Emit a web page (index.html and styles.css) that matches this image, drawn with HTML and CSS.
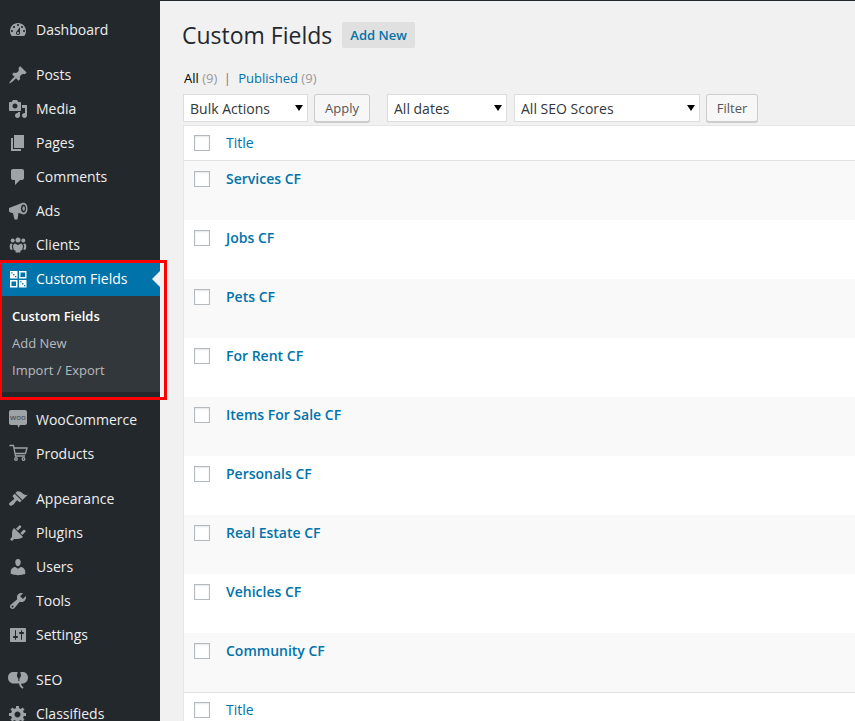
FILE: index.html
```html
<!DOCTYPE html>
<html lang="en">
<head>
  <meta charset="UTF-8" />
  <title>Custom Fields</title>
  <link rel="stylesheet" href="styles.css">
</head>
<body>
  <div class="topbar"></div>
  <div class="wrap">

    <!-- Admin menu -->
    <nav class="sidebar">
      <a class="menu-item"><svg class="icon" viewBox="0 0 20 20"><path d="M3.76 16h12.48c1.1-1.37 1.76-3.11 1.76-5 0-4.42-3.58-8-8-8s-8 3.58-8 8c0 1.89.66 3.63 1.76 5zM10 4c.55 0 1 .45 1 1s-.45 1-1 1-1-.45-1-1 .45-1 1-1zM6 6c.55 0 1 .45 1 1s-.45 1-1 1-1-.45-1-1 .45-1 1-1zm8 0c.55 0 1 .45 1 1s-.45 1-1 1-1-.45-1-1 .45-1 1-1zm-5.37 5.55L12 7v6c0 1.1-.9 2-2 2s-2-.9-2-2c0-.57.24-1.08.63-1.45zM4 10c.55 0 1 .45 1 1s-.45 1-1 1-1-.45-1-1 .45-1 1-1zm12 0c.55 0 1 .45 1 1s-.45 1-1 1-1-.45-1-1 .45-1 1-1zm-5 3c0-.55-.45-1-1-1s-1 .45-1 1 .45 1 1 1 1-.45 1-1z"/></svg>Dashboard</a>
      <div class="menu-sep"></div>
      <a class="menu-item"><svg class="icon" viewBox="0 0 20 20"><path d="M10.44 3.02l1.82-1.82 6.36 6.35-1.83 1.82c-1.05-.68-2.48-.57-3.41.36l-.75.75c-.92.93-1.04 2.35-.35 3.41l-1.83 1.82-2.41-2.41-2.8 2.79c-.42.42-3.38 2.71-3.8 2.29s1.86-3.39 2.28-3.81l2.79-2.79L4.1 9.36l1.83-1.82c1.05.69 2.48.57 3.4-.36l.75-.75c.93-.92 1.05-2.35.36-3.41z"/></svg>Posts</a>
      <a class="menu-item"><svg class="icon" viewBox="0 0 20 20"><path d="M13 11V4c0-.55-.45-1-1-1h-1.67L9 1H5L3.67 3H2c-.55 0-1 .45-1 1v7c0 .55.45 1 1 1h10c.55 0 1-.45 1-1zM7 4.5c1.38 0 2.5 1.12 2.5 2.5S8.38 9.5 7 9.5 4.5 8.38 4.5 7 5.62 4.5 7 4.5zM14 6h5v10.5c0 1.38-1.12 2.5-2.5 2.5S14 17.88 14 16.5s1.12-2.5 2.5-2.5c.17 0 .34.02.5.05V9h-3V6zm-4 8.05V13h2v3.5c0 1.38-1.12 2.5-2.5 2.5S7 17.88 7 16.5 8.12 14 9.5 14c.17 0 .34.02.5.05z"/></svg>Media</a>
      <a class="menu-item"><svg class="icon" viewBox="0 0 20 20"><path d="M6 15V2h10v13H6zm-1 1h8v2H3V5h2v11z"/></svg>Pages</a>
      <a class="menu-item"><svg class="icon" viewBox="0 0 20 20"><path d="M5 2h9c1.1 0 2 .9 2 2v7c0 1.1-.9 2-2 2h-2l-5 5v-5H5c-1.1 0-2-.9-2-2V4c0-1.1.9-2 2-2z"/></svg>Comments</a>
      <a class="menu-item"><svg class="icon" viewBox="0 0 20 20"><path fill-rule="evenodd" d="M1 7L14 2C17 .7 19.500 3 19.500 7.500S17 14.500 14 13l-3.500-1.200L9.500 18.500H6.500L5 12.300 2.500 11.500C1.500 11.200 1 10.500 1 10zM15.500 3.500c-1.500 0-2.600 1.800-2.600 4s1.100 4 2.600 4 2.600-1.800 2.600-4-1.100-4-2.600-4z"/><ellipse cx="15.700" cy="7.500" rx="1.200" ry="2.200"/></svg>Ads</a>
      <a class="menu-item"><svg class="icon" viewBox="0 0 20 20"><circle cx="10" cy="5" r="2.500"/><circle cx="4.700" cy="5.500" r="2"/><circle cx="15.300" cy="5.500" r="2"/><path d="M7 8.500l3 1.500 3-1.500c1.300.5 2 1.700 2 3.200l-.8 3.300-1.600.4-.3 2.100H7.700l-.3-2.100-1.600-.4L5 11.700c0-1.500.7-2.700 2-3.200z"/><path d="M3 8.500c.5.300 1 .4 1.700.4-.5.700-.8 1.700-.8 2.800l.7 2.900-1.300.3L2 14 1.700 11c0-1.100.4-2 1.300-2.500zM17 8.500c-.5.300-1 .4-1.700.4.500.7.800 1.700.8 2.800l-.7 2.900 1.300.3L18 14l.3-3c0-1.100-.4-2-1.300-2.500z"/></svg>Clients</a>

      <a class="menu-item is-current"><svg class="icon" viewBox="0 0 20 20"><path fill-rule="evenodd" d="M2 2h7.500v7.500H2zM3.200 3.200v1.300h1.300V3.200zM5.100 5.100v1.300h1.300V5.100zM7 7v1.300h1.300V7zM11 2h7.500v7.500H11zM12.500 3.500V8H17V3.500zM2 11h7.500v7.500H2zM3.500 12.500V17H8v-4.500zM11 11h7.500v7.500H11zM12.200 12.200v1.300h1.300v-1.300zM14.100 14.100v1.300h1.300v-1.300zM16 16v1.300h1.300V16z"/></svg>Custom Fields</a>
      <ul class="submenu">
        <li class="is-current">Custom Fields</li>
        <li>Add New</li>
        <li>Import / Export</li>
      </ul>
      <div class="menu-sep"></div>

      <a class="menu-item"><svg class="icon" viewBox="0 0 20 20"><path d="M3 0h14c1.100 0 2 .9 2 2v11c0 1.100-.9 2-2 2h-5l-1.500 3-1-3H3c-1.100 0-2-.9-2-2V2c0-1.100.9-2 2-2z"/><text x="10" y="10" class="woo-mark" text-anchor="middle">woo</text></svg>WooCommerce</a>
      <a class="menu-item"><svg class="icon icon-line" viewBox="0 0 20 20"><path d="M1.500 1.500H5.500l2 10.500h9.500M6 4H19l-1.500 5.500H7"/><circle cx="8" cy="15" r="1.300"/><circle cx="15.500" cy="15" r="1.300"/></svg>Products</a>
      <div class="menu-sep"></div>

      <a class="menu-item"><svg class="icon" viewBox="0 0 20 20"><path d="M14.48 11.06L7.41 3.99l1.5-1.5c.5-.56 2.3-.47 3.51.32 1.21.8 1.43 1.28 2.91 2.1 1.18.64 2.45 1.26 4.45.85zm-.71.71L6.7 4.7 4.93 6.47c-.39.39-.39 1.02 0 1.41l1.06 1.06c.39.39.39 1.03 0 1.42-.6.6-1.43 1.11-2.21 1.69-.35.26-.7.53-1.01.84C1.43 13.23.4 14.89 1.65 16.14c1.25 1.25 2.91.22 4.25-1.12.31-.31.58-.66.85-1.01.58-.78 1.09-1.61 1.69-2.21.39-.39 1.02-.39 1.41 0l1.06 1.06c.39.39 1.02.39 1.41 0z"/></svg>Appearance</a>
      <a class="menu-item"><svg class="icon" viewBox="0 0 20 20"><path d="M13.11 4.36L9.87 7.6 8 5.73l3.24-3.24c.35-.34 1.05-.2 1.56.32.52.51.66 1.21.31 1.55zm-8 1.77l.91-1.12 9.01 9.01-1.19.84c-.71.71-2.63 1.16-3.82 1.16H6.14L4.9 17.26c-.59.59-1.54.59-2.12 0-.59-.58-.59-1.53 0-2.12l1.24-1.24v-3.88c0-1.13.4-3.19 1.09-3.89zm7.26 3.97l3.24-3.24c.34-.35 1.04-.21 1.55.31.52.51.66 1.21.31 1.55l-3.24 3.25z"/></svg>Plugins</a>
      <a class="menu-item"><svg class="icon" viewBox="0 0 20 20"><path d="M10 9.25c-2.27 0-2.73-3.44-2.73-3.44C7 4.02 7.82 2 9.97 2c2.16 0 2.98 2.02 2.71 3.81 0 0-.41 3.44-2.68 3.44zm0 2.57L12.72 10c2.39 0 4.52 2.33 4.52 4.53v2.49s-3.65 1.13-7.24 1.13c-3.65 0-7.24-1.13-7.24-1.13v-2.49c0-2.25 1.94-4.48 4.47-4.48z"/></svg>Users</a>
      <a class="menu-item"><svg class="icon" viewBox="0 0 20 20"><path d="M16.68 9.77c-1.34 1.34-3.3 1.67-4.95.99l-5.41 6.52c-.99.99-2.59.99-3.58 0s-.99-2.59 0-3.57l6.52-5.42c-.68-1.65-.35-3.61.99-4.95 1.28-1.28 3.12-1.62 4.72-1.06l-2.89 2.89 2.82 2.82 2.86-2.87c.53 1.58.18 3.39-1.08 4.65zM3.81 16.21c.4.39 1.04.39 1.43 0 .4-.4.4-1.04 0-1.43-.39-.4-1.03-.4-1.43 0-.39.39-.39 1.03 0 1.43z"/></svg>Tools</a>
      <a class="menu-item"><svg class="icon" viewBox="0 0 20 20"><path d="M18 16V4c0-.55-.45-1-1-1H3c-.55 0-1 .45-1 1v12c0 .55.45 1 1 1h14c.55 0 1-.45 1-1zM8 11h1c.55 0 1 .45 1 1s-.45 1-1 1H8v1.5c0 .28-.22.5-.5.5s-.5-.22-.5-.5V13H6c-.55 0-1-.45-1-1s.45-1 1-1h1V5.5c0-.28.22-.5.5-.5s.5.22.5.5V11zm5-2h-1c-.55 0-1-.45-1-1s.45-1 1-1h1V5.5c0-.28.22-.5.5-.5s.5.22.5.5V7h1c.55 0 1 .45 1 1s-.45 1-1 1h-1v5.5c0 .28-.22.5-.5.5s-.5-.22-.5-.5V9z"/></svg>Settings</a>
      <div class="menu-sep"></div>

      <a class="menu-item"><svg class="icon" viewBox="0 0 20 20"><path d="M5.500 2H9c.6 0 .8.6.5 1.200-.8 1.800-.8 3.300.5 4.800.4.500.5 1.500.3 3h1.200c-.2-1.500-.1-2.500.3-3 1.300-1.500 1.500-3 .7-4.800C12.200 2.600 12.400 2 13 2h1.500C17.500 2 20 4 20 7.500s-2.500 6-5.500 6l-1.500.2c.3 1.300 1 2.300 2.500 3.600l-.8 1.500c-2.200-1.300-3.500-3-3.700-5.300H5.500C2.500 13.500 0 11 0 7.500S2.500 2 5.500 2z"/></svg>SEO</a>
      <a class="menu-item"><svg class="icon" viewBox="0 0 20 20"><path d="M18 12h-2.18c-.17.7-.44 1.35-.81 1.93l1.54 1.54-2.1 2.1-1.54-1.54c-.58.36-1.23.63-1.91.79V19H8v-2.18c-.68-.16-1.33-.43-1.91-.79l-1.54 1.54-2.12-2.12 1.54-1.54c-.36-.58-.63-1.23-.79-1.91H1V9.03h2.17c.16-.7.44-1.35.8-1.94L2.43 5.55l2.1-2.1 1.54 1.54c.58-.37 1.24-.64 1.93-.81V2h3v2.18c.68.16 1.33.43 1.91.79l1.54-1.54 2.12 2.12-1.54 1.54c.36.59.64 1.24.8 1.94H18V12zm-8.5 1.5c1.66 0 3-1.34 3-3s-1.34-3-3-3-3 1.34-3 3 1.34 3 3 3z"/></svg>Classifieds</a>
    </nav>

    <!-- Page content -->
    <main class="content">
      <div class="page-head">
        <h1>Custom Fields</h1>
        <a class="add-new">Add New</a>
      </div>

      <div class="views">
        <span class="view-current">All</span> <span class="count">(9)</span>
        <span class="view-sep">|</span>
        <a>Published</a> <span class="count">(9)</span>
      </div>

      <div class="tablenav">
        <label class="select-wrap select-bulk"><select><option>Bulk Actions</option></select></label>
        <button class="btn btn-apply">Apply</button>
        <label class="select-wrap select-dates"><select><option>All dates</option></select></label>
        <label class="select-wrap select-seo"><select><option>All SEO Scores</option></select></label>
        <button class="btn btn-filter">Filter</button>
      </div>

      <div class="list-table">
        <div class="row row-head"><span class="check"></span><a>Title</a></div>
        <div class="row row-item"><span class="check"></span><a>Services CF</a></div>
        <div class="row row-item"><span class="check"></span><a>Jobs CF</a></div>
        <div class="row row-item"><span class="check"></span><a>Pets CF</a></div>
        <div class="row row-item"><span class="check"></span><a>For Rent CF</a></div>
        <div class="row row-item"><span class="check"></span><a>Items For Sale CF</a></div>
        <div class="row row-item"><span class="check"></span><a>Personals CF</a></div>
        <div class="row row-item"><span class="check"></span><a>Real Estate CF</a></div>
        <div class="row row-item"><span class="check"></span><a>Vehicles CF</a></div>
        <div class="row row-item"><span class="check"></span><a>Community CF</a></div>
        <div class="row row-foot"><span class="check"></span><a>Title</a></div>
      </div>
    </main>
  </div>

  <!-- Red annotation box from the screenshot -->
  <div class="highlight"></div>
</body>
</html>
```

FILE: styles.css
```css
html, body {
  margin: 0;
  height: 721px;
  overflow: hidden;
}
body {
  position: relative;
  background: #f1f1f1;
  color: #444;
  font-family: "Open Sans", sans-serif;
  font-size: 13px;
}
.topbar {
  height: 1px;
  background: #23282d;
}
.wrap {
  display: flex;
}

/* Sidebar */
.sidebar {
  flex: none;
  width: 160px;
  height: 720px;
  padding-top: 12px;
  box-sizing: border-box;
  background: #23282d;
  overflow: hidden;
}
.menu-item {
  display: flex;
  align-items: center;
  gap: 8px;
  height: 34px;
  padding-left: 8px;
  color: #eee;
  font-size: 14px;
  line-height: 18px;
}
.menu-sep {
  height: 11px;
}
.icon {
  flex: none;
  width: 20px;
  height: 20px;
  fill: #9ea3a8;
}
.icon-line {
  fill: none;
  stroke: #9ea3a8;
  stroke-width: 1.3;
}
.woo-mark {
  fill: #3a3f50;
  font-family: "Open Sans", sans-serif;
  font-size: 8px;
}
.menu-item.is-current {
  position: relative;
  background: #0073aa;
  color: #fff;
}
.menu-item.is-current .icon {
  fill: #fff;
}
.menu-item.is-current::after {
  content: "";
  position: absolute;
  right: 0;
  top: 9px;
  border: 8px solid transparent;
  border-right-color: #f1f1f1;
  border-left-width: 0;
}
.submenu {
  margin: 0;
  padding: 7px 0 8px;
  list-style: none;
  background: #32373c;
  color: rgba(240, 245, 250, 0.7);
}
.submenu li {
  height: 27px;
  padding-left: 12px;
  line-height: 26px;
}
.submenu .is-current {
  color: #fff;
  font-weight: 600;
}

/* Content */
.content {
  flex: 1;
  min-width: 0;
  padding-left: 23px;
}
.page-head {
  display: flex;
  align-items: center;
  gap: 10px;
  height: 26px;
  margin-top: 21px;
}
h1 {
  margin: 0 0 0 -1px;
  color: #23282d;
  font-size: 23px;
  font-weight: 400;
  line-height: 26px;
}
.add-new {
  padding: 0 8px;
  border-radius: 2px;
  background: #e0e0e0;
  color: #0073aa;
  font-weight: 600;
  line-height: 26px;
}
.views {
  margin-top: 21px;
  height: 18px;
  padding-left: 1px;
  line-height: 18px;
  color: #0073aa;
}
.views a {
  color: #0073aa;
}
.view-current {
  color: #000;
}
.count {
  color: #999;
}
.view-sep {
  margin: 0 4px 0 3px;
  color: #72777c;
}
.tablenav {
  display: flex;
  margin-top: 7px;
  height: 28px;
}
.select-wrap {
  position: relative;
  display: block;
}
.select-wrap::after {
  content: "";
  position: absolute;
  right: 5px;
  top: 11px;
  border: 4px solid transparent;
  border-top: 6px solid #000;
  border-bottom-width: 0;
  pointer-events: none;
}
.select-wrap select {
  display: block;
  width: 100%;
  height: 28px;
  padding: 0 6px;
  box-sizing: border-box;
  appearance: none;
  border: 1px solid #ddd;
  border-radius: 0;
  background: #fff;
  color: #32373c;
  font-family: inherit;
  font-size: 14px;
}
.select-bulk {
  width: 125px;
}
.select-dates {
  width: 120px;
  margin-left: 17px;
}
.select-seo {
  width: 186px;
  margin-left: 7px;
}
.btn {
  height: 28px;
  margin-left: 6px;
  padding: 0;
  box-sizing: border-box;
  border: 1px solid #ccc;
  border-radius: 3px;
  background: #f7f7f7;
  box-shadow: 0 1px 0 #ccc;
  color: #555;
  font-family: inherit;
  font-size: 13px;
}
.btn-apply {
  width: 56px;
}
.btn-filter {
  width: 52px;
}

/* Table */
.list-table {
  margin-top: 3px;
  border: 1px solid #e5e5e5;
  border-right: 0;
  background: #fff;
}
.row {
  display: flex;
  align-items: flex-start;
  gap: 16px;
  padding: 9px 0 0 10px;
  box-sizing: border-box;
  color: #0073aa;
  font-size: 14px;
  line-height: 18px;
}
.row a {
  margin-top: -1px;
}
.row-head {
  height: 35px;
  border-bottom: 1px solid #e1e1e1;
}
.row-foot {
  height: 35px;
  border-top: 1px solid #e1e1e1;
}
.row-item {
  height: 59px;
  padding-top: 10px;
  font-weight: 600;
}
.row-item:nth-child(even) {
  background: #f9f9f9;
}
.check {
  flex: none;
  width: 16px;
  height: 16px;
  box-sizing: border-box;
  border: 1px solid #b4b9be;
  background: #fff;
  box-shadow: inset 0 1px 2px rgba(0, 0, 0, 0.1);
}

/* Annotation */
.highlight {
  position: absolute;
  left: -1px;
  top: 260px;
  width: 162px;
  height: 134px;
  border: 3px solid #f00;
}
```
